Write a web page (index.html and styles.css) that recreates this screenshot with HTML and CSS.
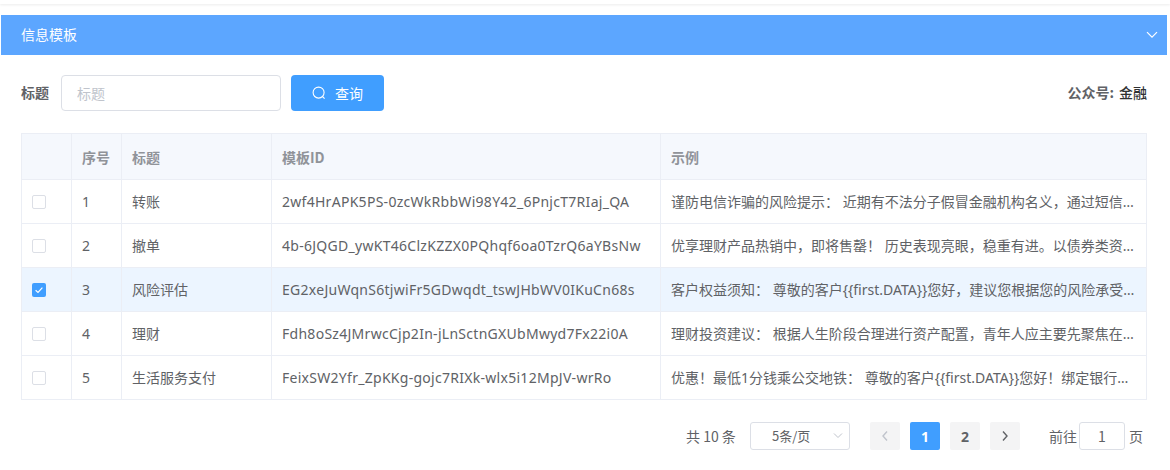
FILE: index.html
```html
<!DOCTYPE html>
<html lang="zh-CN">
<head>
<meta charset="utf-8">
<title>信息模板</title>
<link rel="stylesheet" href="styles.css">
</head>
<body>
<div class="topline"></div>
<section class="panel">
  <header class="panel-head">
    <span class="panel-title">信息模板</span>
    <svg class="chev" width="12" height="8" viewBox="0 0 12 8"><path d="M1 1.2 6 6.2 11 1.2" fill="none" stroke="#fff" stroke-width="1.2"/></svg>
  </header>
  <div class="filter">
    <label class="filter-label">标题</label>
    <input class="filter-input" placeholder="标题">
    <button class="btn-search">
      <svg width="14" height="14" viewBox="0 0 14 14"><circle cx="6.6" cy="6.6" r="5.5" fill="none" stroke="#fff" stroke-width="1.1"/><path d="M10.6 10.6 12.6 12.6" stroke="#fff" stroke-width="1.1"/></svg>
      <span>查询</span>
    </button>
    <div class="account"><span class="account-key">公众号:</span><span class="account-val">金融</span></div>
  </div>
  <table class="grid">
    <colgroup><col class="c1"><col class="c2"><col class="c3"><col class="c4"><col></colgroup>
    <thead>
      <tr><th></th><th>序号</th><th>标题</th><th>模板ID</th><th>示例</th></tr>
    </thead>
    <tbody>
      <tr><td><span class="check"></span></td><td class="num">1</td><td class="ttl">转账</td><td class="tid">2wf4HrAPK5PS-0zcWkRbbWi98Y42_6PnjcT7RIaj_QA</td><td><div class="clip">谨防电信诈骗的风险提示： 近期有不法分子假冒金融机构名义，通过短信或电话诱导您转账汇款，请务必提高警惕</div></td></tr>
      <tr><td><span class="check"></span></td><td class="num">2</td><td class="ttl">撤单</td><td class="tid">4b-6JQGD_ywKT46ClzKZZX0PQhqf6oa0TzrQ6aYBsNw</td><td><div class="clip">优享理财产品热销中，即将售罄！ 历史表现亮眼，稳重有进。以债券类资产为主要投资方向，欢迎了解详情</div></td></tr>
      <tr class="on"><td><span class="check checked"><svg width="14" height="14" viewBox="0 0 14 14"><path d="M3.6 7.2 6 9.4 10.4 4.6" fill="none" stroke="#fff" stroke-width="1.2"/></svg></span></td><td class="num">3</td><td class="ttl">风险评估</td><td class="tid">EG2xeJuWqnS6tjwiFr5GDwqdt_tswJHbWV0IKuCn68s</td><td><div class="clip">客户权益须知： 尊敬的客户{{first.DATA}}您好，建议您根据您的风险承受能力选择合适的产品，定期进行评估</div></td></tr>
      <tr><td><span class="check"></span></td><td class="num">4</td><td class="ttl">理财</td><td class="tid">Fdh8oSz4JMrwcCjp2In-jLnSctnGXUbMwyd7Fx22i0A</td><td><div class="clip">理财投资建议： 根据人生阶段合理进行资产配置，青年人应主要先聚焦在能力提升与长期积累之上</div></td></tr>
      <tr><td><span class="check"></span></td><td class="num">5</td><td class="ttl">生活服务支付</td><td class="tid">FeixSW2Yfr_ZpKKg-gojc7RIXk-wlx5i12MpJV-wrRo</td><td><div class="clip">优惠！最低1分钱乘公交地铁： 尊敬的客户{{first.DATA}}您好！绑定银行卡即可享受出行优惠活动</div></td></tr>
    </tbody>
  </table>
  <nav class="pager">
    <span class="total">共 10 条</span>
    <div class="size">
      <span>5条/页</span>
      <svg width="12" height="8" viewBox="0 0 12 8"><path d="M2 1.5 6 5.5 10 1.5" fill="none" stroke="#c0c4cc" stroke-width="1"/></svg>
    </div>
    <div class="pages">
      <button class="pg"><svg width="8" height="12" viewBox="0 0 8 12"><path d="M6 1.5 2 6 6 10.5" fill="none" stroke="#c0c4cc" stroke-width="1.4"/></svg></button>
      <button class="pg active">1</button>
      <button class="pg">2</button>
      <button class="pg"><svg width="8" height="12" viewBox="0 0 8 12"><path d="M2 1.5 6 6 2 10.5" fill="none" stroke="#606266" stroke-width="1.4"/></svg></button>
    </div>
    <div class="jump"><span>前往</span><span class="jump-box">1</span><span>页</span></div>
  </nav>
</section>
</body>
</html>
```
FILE: styles.css
```css
* { box-sizing: border-box; }
html, body { margin: 0; padding: 0; background: #fff; }
body {
  width: 1170px;
  height: 470px;
  overflow: hidden;
  font-family: "Noto Sans CJK SC", "Noto Sans", sans-serif;
  font-size: 14px;
  line-height: 20px;
  color: #606266;
}
.topline {
  height: 4px;
  background: #fff;
  box-shadow: 0 1px 3px rgba(0, 0, 0, 0.08);
}
.panel { margin: 11px 3px 0 1px; }
.panel-head {
  height: 40px;
  background: #5ca6ff;
  color: #fff;
  display: flex;
  align-items: center;
  justify-content: space-between;
  padding: 0 9px 0 20px;
}
.panel-title { padding-bottom: 2px; }
.filter {
  display: flex;
  align-items: center;
  height: 36px;
  margin: 20px 20px 22px 20px;
}
.filter-label { font-weight: 700; width: 40px; padding-bottom: 2px; }
.filter-input {
  width: 220px;
  height: 36px;
  border: 1px solid #dcdfe6;
  border-radius: 4px;
  padding: 0 15px;
  font: inherit;
  outline: none;
}
.filter-input::placeholder { color: #c0c4cc; }
.btn-search {
  margin-left: 10px;
  width: 93px;
  height: 36px;
  border: 0;
  border-radius: 4px;
  background: #409eff;
  color: #fff;
  font: inherit;
  display: flex;
  align-items: center;
  justify-content: center;
  gap: 9px;
}
.account {
  margin-left: auto;
  display: flex;
  gap: 5px;
  font-weight: 700;
  padding-bottom: 2px;
}
.account-val { color: #303133; font-weight: 500; }
.grid {
  width: 1126px;
  margin-left: 20px;
  border-collapse: collapse;
  table-layout: fixed;
}
.c1, .c2 { width: 50px; }
.c3 { width: 150px; }
.c4 { width: 389px; }
.grid th, .grid td {
  border: 1px solid #ebeef5;
  padding: 0 10px;
  text-align: left;
  white-space: nowrap;
  overflow: hidden;
}
.grid th {
  height: 46px;
  background: #f5f8fd;
  color: #909399;
  font-weight: 700;
}
.grid td { height: 44px; }
.grid td.ttl { padding-bottom: 2px; }
.grid tr.on td { background: #ecf5ff; }
.tid, .num { font-family: "Noto Sans", sans-serif; }
.tid { letter-spacing: 0.28px; }
.clip {
  overflow: hidden;
  text-overflow: ellipsis;
  font-family: "Noto Sans", "Noto Sans CJK SC", sans-serif;
}
.check {
  display: block;
  width: 14px;
  height: 14px;
  border: 1px solid #dcdfe6;
  border-radius: 2px;
  background: #fff;
}
.check.checked { background: #409eff; border: 0; }
.check svg { display: block; }
.pager {
  display: flex;
  align-items: center;
  height: 28px;
  margin-top: 22px;
}
.total { width: 49px; margin-left: 685px; white-space: nowrap; }
.size {
  margin-left: 15px;
  width: 100px;
  height: 28px;
  border: 1px solid #dcdfe6;
  border-radius: 3px;
  display: flex;
  align-items: center;
  justify-content: space-between;
  padding: 0 5px 0 21px;
  font-size: 13px;
}
.pages { display: flex; gap: 10px; margin-left: 20px; }
.pg {
  width: 30px;
  height: 28px;
  border: 0;
  border-radius: 2px;
  background: #f4f4f5;
  color: #606266;
  font: 700 14px "Noto Sans", sans-serif;
  padding: 0;
  display: flex;
  align-items: center;
  justify-content: center;
}
.pg.active { background: #409eff; color: #fff; }
.jump { display: flex; align-items: center; margin-left: 29px; }
.jump-box {
  width: 46px;
  height: 28px;
  margin: 0 4px 0 2px;
  border: 1px solid #dcdfe6;
  border-radius: 3px;
  display: flex;
  align-items: center;
  justify-content: center;
}
```
